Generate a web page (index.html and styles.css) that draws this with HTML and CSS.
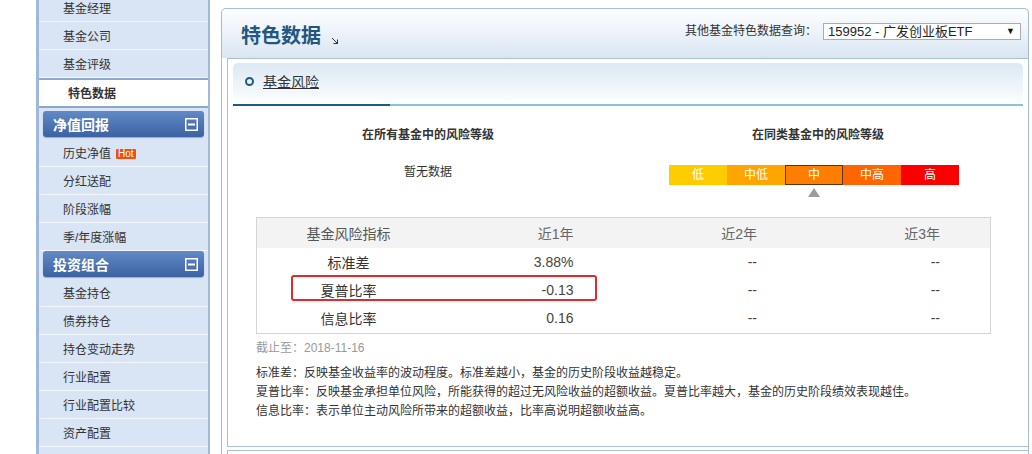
FILE: index.html
```html
<!DOCTYPE html>
<html lang="zh-CN">
<head>
<meta charset="utf-8">
<title>特色数据</title>
<link rel="stylesheet" href="styles.css">
</head>
<body>
<div class="page">
  <aside class="sidebar">
    <ul class="menu">
      <li class="item">基金经理</li>
      <li class="item">基金公司</li>
      <li class="item">基金评级</li>
      <li class="item active">特色数据</li>
    </ul>
    <div class="group-head">净值回报<svg class="toggle" width="13" height="13" viewBox="0 0 13 13"><rect x="0.75" y="0.75" width="11.5" height="11.5" fill="none" stroke="#fff" stroke-width="1.5"/><rect x="3" y="5.5" width="7" height="2" fill="#fff"/></svg></div>
    <ul class="menu">
      <li class="item">历史净值<span class="hot">Hot</span></li>
      <li class="item">分红送配</li>
      <li class="item">阶段涨幅</li>
      <li class="item">季/年度涨幅</li>
    </ul>
    <div class="group-head">投资组合<svg class="toggle" width="13" height="13" viewBox="0 0 13 13"><rect x="0.75" y="0.75" width="11.5" height="11.5" fill="none" stroke="#fff" stroke-width="1.5"/><rect x="3" y="5.5" width="7" height="2" fill="#fff"/></svg></div>
    <ul class="menu">
      <li class="item">基金持仓</li>
      <li class="item">债券持仓</li>
      <li class="item">持仓变动走势</li>
      <li class="item">行业配置</li>
      <li class="item">行业配置比较</li>
      <li class="item">资产配置</li>
      <li class="item">&nbsp;</li>
    </ul>
  </aside>

  <main class="panel">
    <header class="panel-head">
      <h1 class="title">特色数据<svg class="title-arrow" width="8" height="8" viewBox="0 0 8 8"><path d="M1 1 L6.5 6.5 M2.5 6.5 H6.5 V2.5" fill="none" stroke="#333" stroke-width="1"/></svg></h1>
      <div class="query">
        <span class="query-label">其他基金特色数据查询：</span>
        <div class="select"><span>159952 - 广发创业板ETF</span><span class="caret">▼</span></div>
      </div>
    </header>

    <section class="box">
      <div class="tabbar">
        <div class="tab"><span class="ring"></span><a class="tab-link">基金风险</a></div>
      </div>

      <div class="levels">
        <div class="level-col">
          <h3 class="level-title">在所有基金中的风险等级</h3>
          <div class="nodata">暂无数据</div>
        </div>
        <div class="level-col">
          <h3 class="level-title">在同类基金中的风险等级</h3>
          <div class="bar">
            <span class="seg s1">低</span>
            <span class="seg s2">中低</span>
            <span class="seg s3 current">中</span>
            <span class="seg s4">中高</span>
            <span class="seg s5">高</span>
          </div>
          <div class="pointer-row"><span class="pointer"></span></div>
        </div>
      </div>

      <div class="table-wrap">
        <table class="risk-table">
          <thead>
            <tr><th class="name">基金风险指标</th><th>近1年</th><th>近2年</th><th>近3年</th></tr>
          </thead>
          <tbody>
            <tr><td class="name">标准差</td><td>3.88%</td><td>--</td><td>--</td></tr>
            <tr><td class="name">夏普比率</td><td>-0.13</td><td>--</td><td>--</td></tr>
            <tr><td class="name">信息比率</td><td>0.16</td><td>--</td><td>--</td></tr>
          </tbody>
        </table>
        <div class="highlight"></div>
      </div>

      <div class="asof">截止至：2018-11-16</div>
      <div class="notes">
        <p>标准差：反映基金收益率的波动程度。标准差越小，基金的历史阶段收益越稳定。</p>
        <p>夏普比率：反映基金承担单位风险，所能获得的超过无风险收益的超额收益。夏普比率越大，基金的历史阶段绩效表现越佳。</p>
        <p>信息比率：表示单位主动风险所带来的超额收益，比率高说明超额收益高。</p>
      </div>
    </section>

    <section class="box next">
      <div class="tabbar"></div>
    </section>
  </main>
</div>
</body>
</html>
```

FILE: styles.css
```css
* { box-sizing: border-box; }
html, body { margin: 0; padding: 0; }
body {
  background: #fff;
  font-family: "Liberation Sans", "Noto Sans CJK SC", sans-serif;
  font-size: 12px;
  color: #333;
  overflow: hidden;
}
.page {
  display: flex;
  align-items: flex-start;
  gap: 11px;
  padding-left: 36px;
  height: 454px;
  overflow: hidden;
}

/* Sidebar */
.sidebar {
  width: 174px;
  flex: none;
  margin-top: -6px;
  height: 480px;
  background: #d9e5f5;
  border-left: 3px solid #9fb8dd;
  border-right: 2px solid #9fb8dd;
}
.menu { list-style: none; margin: 0; padding: 0; }
.item {
  height: 28px;
  line-height: 20px;
  padding: 3px 0 0 24px;
  border-bottom: 1px solid #f3f7fc;
  font-size: 12px;
  color: #333;
  display: flex;
  align-items: center;
}
.item.active {
  height: 30px;
  background: #fff;
  border-top: 2px solid #8ba8d2;
  border-bottom: 2px solid #8ba8d2;
  margin-bottom: 3px;
  padding: 2px 0 0 29px;
  font-weight: bold;
}
.hot {
  display: inline-block;
  margin-left: 5px;
  background: #f0500f;
  color: #fff;
  font-size: 10px;
  line-height: 10px;
  height: 10px;
  padding: 0 2px;
  border-radius: 1px;
  font-family: "Liberation Sans", sans-serif;
}
.group-head {
  height: 26px;
  margin: 0 4px 2px 4px;
  padding: 0 6px 0 10px;
  border-radius: 3px;
  background: linear-gradient(#628ac6, #3b62a2);
  box-shadow: 0 1px 1px rgba(40, 70, 120, 0.35);
  color: #fff;
  font-weight: bold;
  font-size: 14px;
  display: flex;
  align-items: center;
  justify-content: space-between;
}
.toggle { display: block; }

/* Main panel */
.panel {
  width: 808px;
  flex: none;
  margin-top: 8px;
  height: 470px;
  border: 1px solid #a4bdd0;
  border-bottom: none;
  border-radius: 5px 5px 0 0;
  background: #fff;
}
.panel-head {
  height: 49px;
  display: flex;
  justify-content: space-between;
  align-items: flex-start;
  padding: 0 7px 0 19px;
  border-radius: 5px 5px 0 0;
  background: linear-gradient(#fdfeff, #d9e6f2);
}
.title {
  margin: 15px 0 0 0;
  font-size: 20px;
  line-height: 24px;
  font-weight: bold;
  color: #245682;
  display: flex;
  align-items: flex-end;
}
.title-arrow { margin: 0 0 3px 10px; }
.query {
  display: flex;
  align-items: center;
  margin-top: 14px;
  gap: 6px;
}
.query-label { font-size: 12px; color: #333; line-height: 17px; }
.select {
  width: 198px;
  height: 17px;
  border: 1px solid #a9adb3;
  background: #fff;
  padding: 0 5px 0 4px;
  font-size: 13px;
  line-height: 15px;
  color: #222;
  display: flex;
  justify-content: space-between;
  align-items: center;
}
.caret { font-size: 9px; color: #111; }

/* Section box */
.box {
  margin-left: 5px;
  border: 1px solid #a9c1d1;
  border-right: none;
  padding: 4px 5px 25px 5px;
}
.box.next { margin-top: 3px; padding-bottom: 0; }
.tabbar {
  height: 43px;
  border-radius: 5px 5px 0 0;
  background: linear-gradient(#dce8f3, #fdfeff);
  border-bottom: 2px solid #8cc2d5;
  display: flex;
}
.tab {
  width: 157px;
  height: 43px;
  border-bottom: 2px solid #1f5b7f;
  padding: 0 0 4px 12px;
  display: flex;
  align-items: center;
  align-self: flex-start;
}
.ring {
  width: 9px;
  height: 9px;
  border: 2px solid #1f5b7f;
  border-radius: 50%;
  margin-right: 9px;
}
.tab-link {
  font-size: 14px;
  color: #333;
  text-decoration: underline;
  line-height: 18px;
}

/* Risk levels */
.levels {
  display: grid;
  grid-template-columns: 390px 390px;
  margin-top: 19px;
}
.level-title {
  margin: 0;
  font-size: 12px;
  line-height: 20px;
  font-weight: bold;
  text-align: center;
  color: #333;
}
.nodata {
  margin-top: 17px;
  line-height: 20px;
  text-align: center;
  font-size: 12px;
}
.bar {
  display: flex;
  width: 290px;
  height: 20px;
  margin: 20px 0 0 46px;
}
.seg {
  width: 58px;
  height: 20px;
  line-height: 20px;
  text-align: center;
  color: #fff;
  font-size: 12px;
}
.s1 { background: #ffcc00; }
.s2 { background: #ffa400; }
.s3 { background: #ff7d00; }
.s4 { background: #ff6500; }
.s5 { background: #fa0000; }
.current { border: 1px solid #5b3614; line-height: 18px; }
.pointer-row {
  width: 290px;
  margin: 3px 0 0 46px;
  display: flex;
  justify-content: center;
}
.pointer {
  width: 0;
  height: 0;
  border-left: 6px solid transparent;
  border-right: 6px solid transparent;
  border-bottom: 9px solid #9c9c9c;
}

/* Table */
.table-wrap {
  position: relative;
  width: 735px;
  margin: 20px 0 0 23px;
}
.risk-table {
  width: 735px;
  border-collapse: collapse;
  border: 1px solid #d4d4d4;
  table-layout: fixed;
  font-size: 14px;
}
.risk-table th {
  height: 30px;
  background: #f3f3f3;
  font-weight: normal;
  color: #666;
  text-align: right;
  padding: 0 50px 0 0;
}
.risk-table td {
  height: 28px;
  text-align: right;
  padding: 0 50px 0 0;
  color: #444;
}
.risk-table tbody tr:last-child td { height: 30px; }
.risk-table .name { text-align: center; padding: 0; color: #555; }
.risk-table td.name { color: #333; }
.highlight {
  position: absolute;
  left: 35px;
  top: 58px;
  width: 306px;
  height: 26px;
  border: 2px solid #e32a2a;
  border-radius: 3px;
}

/* Notes */
.asof {
  margin: 5px 0 0 23px;
  line-height: 18px;
  color: #999;
  font-size: 12px;
}
.notes {
  margin: 7px 0 0 23px;
}
.notes p {
  margin: 0;
  line-height: 19px;
  font-size: 12px;
  color: #333;
}
```
